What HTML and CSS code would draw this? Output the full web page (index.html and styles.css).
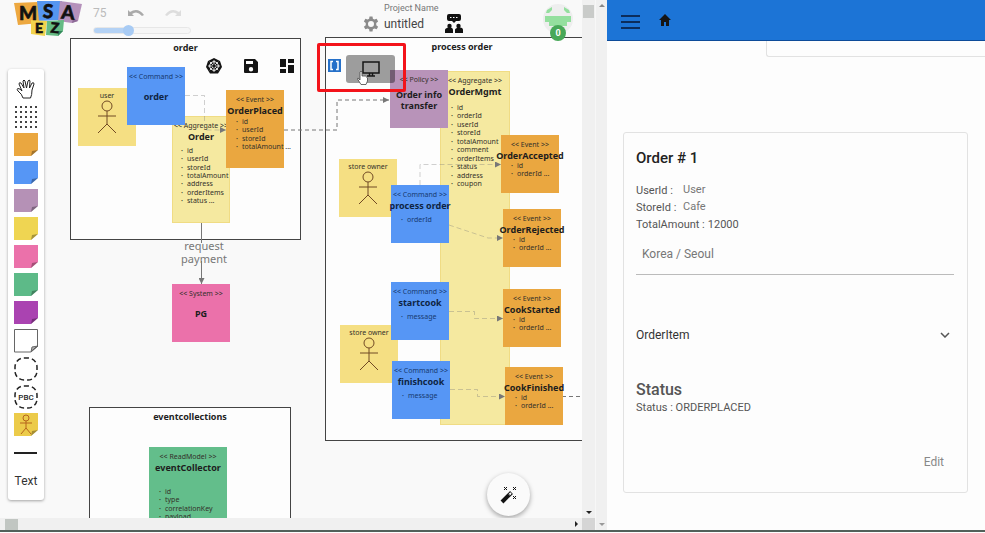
FILE: index.html
```
<!DOCTYPE html>
<html lang="en">
<head>
<meta charset="utf-8">
<title>MSA Ez - untitled</title>
<link rel="stylesheet" href="styles.css">
</head>
<body>
<div class="modeler">
  <main class="canvas">
    <section class="frame frame-order">
      <h2>order</h2>
      <div class="frame-tools">
        <button aria-label="Kubernetes"><svg viewBox="0 0 16 16" width="16" height="16"><path d="M8 0l6 3 2 6-4 6.500H4L0 9l2-6z" fill="#151515"/><g fill="none" stroke="#fff"><circle cx="8" cy="8" r="4.300"/><path d="M8 2v12M2 8h12M3.800 3.800l8.400 8.400M12.200 3.800l-8.400 8.400" stroke-width=".8"/></g><circle cx="8" cy="8" r="1.400" fill="#151515"/></svg></button>
        <button aria-label="Save"><svg viewBox="0 0 14 14" width="14" height="14"><path fill-rule="evenodd" fill="#151515" d="M1 0h10l3 3v10q0 1-1 1H1q-1 0-1-1V1q0-1 1-1zm1 2v3h7V2zm5 6a2.200 2.200 0 1 0 0 4.400A2.200 2.200 0 0 0 7 8z"/></svg></button>
        <button aria-label="Dashboard"><svg viewBox="0 0 14 14" width="14" height="14"><path fill="#151515" d="M0 0h6v8H0zM8 0h6v4H8zM0 10h6v4H0zM8 6h6v8H8z"/></svg></button>
      </div>
    </section>
    <section class="frame frame-process"><h2>process order</h2></section>
    <section class="frame frame-events"><h2>eventcollections</h2></section>

    <article class="note actor n-user"><p>user</p><svg class="person" viewBox="0 0 20 34"><circle cx="10" cy="6" r="5"/><path d="M10 11v13M1 16h18M10 24l-9 9M10 24l9 9"/></svg></article>
    <article class="note actor n-owner1"><p>store owner</p><svg class="person" viewBox="0 0 20 34"><circle cx="10" cy="6" r="5"/><path d="M10 11v13M1 16h18M10 24l-9 9M10 24l9 9"/></svg></article>
    <article class="note actor n-owner2"><p>store owner</p><svg class="person" viewBox="0 0 20 34"><circle cx="10" cy="6" r="5"/><path d="M10 11v13M1 16h18M10 24l-9 9M10 24l9 9"/></svg></article>

    <article class="note aggregate n-order-agg"><p>&lt;&lt; Aggregate &gt;&gt;</p><h3>Order</h3>
      <ul><li>id</li><li>userId</li><li>storeId</li><li>totalAmount</li><li>address</li><li>orderItems</li><li>status ...</li></ul></article>
    <article class="note aggregate n-mgmt"><p>&lt;&lt; Aggregate &gt;&gt;</p><h3>OrderMgmt</h3>
      <ul><li>id</li><li>orderId</li><li>userId</li><li>storeId</li><li>totalAmount</li><li>comment</li><li>orderItems</li><li>status</li><li>address</li><li>coupon</li></ul></article>

    <svg class="links" width="582" height="518" aria-hidden="true">
      <defs><marker id="arrow" viewBox="0 0 6 6" refX="6" refY="3" markerWidth="6" markerHeight="6" markerUnits="userSpaceOnUse" orient="auto"><path d="M0 0l6 3-6 3z" fill="#777" stroke="none"/></marker></defs>
      <path class="faint" d="M185 95.500H204.500V130H226" marker-end="url(#arrow)"/>
      <path class="strong" d="M284 130H337V100H389" marker-end="url(#arrow)"/>
      <path class="solid" d="M201.500 223V243M201.500 261V284" marker-end="url(#arrow)"/>
      <path class="faint" d="M420 185V164.500H501" marker-end="url(#arrow)"/>
      <path class="faint" d="M449 225L488 238H503" marker-end="url(#arrow)"/>
      <path class="faint" d="M449 311.500H474.500V318.500H503" marker-end="url(#arrow)"/>
      <path class="faint" d="M450 389.500H477.500V396.500H505" marker-end="url(#arrow)"/>
      <path class="strong" d="M562 396.500H582"/>
    </svg>
    <p class="link-label">request payment</p>

    <article class="note command plain n-order-cmd"><p>&lt;&lt; Command &gt;&gt;</p><h3>order</h3></article>
    <article class="note command n-process"><p>&lt;&lt; Command &gt;&gt;</p><h3>process order</h3><ul><li>orderId</li></ul></article>
    <article class="note command n-start"><p>&lt;&lt; Command &gt;&gt;</p><h3>startcook</h3><ul><li>message</li></ul></article>
    <article class="note command n-finish"><p>&lt;&lt; Command &gt;&gt;</p><h3>finishcook</h3><ul><li>message</li></ul></article>
    <article class="note event n-placed"><p>&lt;&lt; Event &gt;&gt;</p><h3>OrderPlaced</h3><ul><li>id</li><li>userId</li><li>storeId</li><li>totalAmount ...</li></ul></article>
    <article class="note event n-accepted"><p>&lt;&lt; Event &gt;&gt;</p><h3>OrderAccepted</h3><ul><li>id</li><li>orderId ...</li></ul></article>
    <article class="note event n-rejected"><p>&lt;&lt; Event &gt;&gt;</p><h3>OrderRejected</h3><ul><li>id</li><li>orderId ...</li></ul></article>
    <article class="note event n-started"><p>&lt;&lt; Event &gt;&gt;</p><h3>CookStarted</h3><ul><li>id</li><li>orderId ...</li></ul></article>
    <article class="note event n-finished"><p>&lt;&lt; Event &gt;&gt;</p><h3>CookFinished</h3><ul><li>id</li><li>orderId ...</li></ul></article>
    <article class="note policy n-policy"><p>&lt;&lt; Policy &gt;&gt;</p><h3>Order info transfer</h3></article>
    <article class="note system plain n-pg"><p>&lt;&lt; System &gt;&gt;</p><h3>PG</h3></article>
    <article class="note read n-read"><p>&lt;&lt; ReadModel &gt;&gt;</p><h3>eventCollector</h3><ul><li>id</li><li>type</li><li>correlationKey</li><li>payload</li></ul></article>

    <header class="topbar">
      <svg class="logo" viewBox="0 0 70 38" width="70" height="38" role="img" aria-label="MSA Ez">
        <path d="M0 3l24-1 2 21-22 2z" fill="#eda840"/><path d="M23 1h25l-3 19-20 1z" fill="#5596f0"/><path d="M46 1l22 3-4 17-6 2-14-2z" fill="#b591bb"/><path d="M58 23l1-5 5 3z" fill="#8e6b97"/>
        <path d="M17 20l16 1-2 15-14-2z" fill="#f1d34d"/><path d="M33 21l17-1-1 11-5 5-12-1z" fill="#65bb84"/><path d="M44 36v-5h5z" fill="#34875b"/>
        <g font-family="Lato, sans-serif" font-weight="900" fill="#111" stroke="#111" stroke-width=".6" text-anchor="middle"><text x="14" y="20" font-size="19">M</text><text x="34" y="18" font-size="19" transform="rotate(3 34 12)">S</text><text x="54" y="19" font-size="19" transform="rotate(5 54 12)">A</text><text x="25" y="33" font-size="14">E</text><text x="41" y="33" font-size="14" transform="rotate(5 41 28)">Z</text></g>
      </svg>
      <div class="view-tools">
        <div class="history">
          <output>75</output>
          <button aria-label="Undo"><svg viewBox="0 0 16 8" width="16" height="8"><path d="M0 1v6h6L4 5q5-4 10 2l2-1Q10-2 2 3z" fill="#aaa"/></svg></button>
          <button aria-label="Redo"><svg viewBox="0 0 16 8" width="16" height="8"><path d="M16 1v6h-6l2-2Q7 1 2 7L0 6q6-8 14-3z" fill="#ddd"/></svg></button>
        </div>
        <input class="zoom" type="range" min="0" max="100" value="34" aria-label="Zoom">
      </div>
      <div class="project">
        <label for="project-name">Project Name</label>
        <div class="project-row">
          <svg viewBox="0 0 24 24" width="18" height="18"><path fill="#8b8b8b" fill-rule="evenodd" d="M10 2h4l.5 3 2 1 3-1 2 3.500L19 10.500v3l2.500 2-2 3.500-3-1-2 1-.5 3h-4l-.5-3-2-1-3 1-2-3.500 2.500-2v-3L2.500 8.500l2-3.500 3 1 2-1zM12 8a4 4 0 1 0 0 8 4 4 0 0 0 0-8z"/></svg>
          <input id="project-name" value="untitled">
        </div>
      </div>
      <button class="chat" aria-label="Discussion"><svg viewBox="0 0 18 20" width="18" height="20"><path fill="#111" d="M4 0h10q2 0 2 2v3q0 2-2 2h-3L9 9 7 7H4Q2 7 2 5V2q0-2 2-2zM0 19v-3q0-2 4-2.500t4 2.500v3zm10 0v-3q0-2 4-2.500t4 2.500v3z"/><circle cx="4.500" cy="12" r="2.200" fill="#111"/><circle cx="13.500" cy="12" r="2.200" fill="#111"/><path stroke="#fff" stroke-dasharray="1.500 1.500" d="M5 3.500h8"/></svg></button>
      <div class="avatar">
        <svg viewBox="0 0 30 30" width="30" height="30"><circle cx="15" cy="15" r="15" fill="#eee"/><path fill="#94df9e" d="M2 12h26v6h-4v4H6v-4H2zM4 6l5-3v3l-3 3H3zm22 0l-5-3v3l3 3h3zM9 24h12v4H9z"/></svg>
        <span class="badge">0</span>
      </div>
    </header>

    <button class="brackets" aria-label="Code"><svg viewBox="0 0 13 13" width="13" height="13"><path d="M5 2.500H3v8h2M8 2.500h2v8H8" fill="none" stroke="#fff" stroke-width="1.500"/></svg></button>
    <button class="preview" aria-label="Preview"><svg viewBox="0 0 18 16" width="18" height="16"><path d="M1 1h16v11H1zM5 15h8M7.500 12v3M10.500 12v3" fill="none" stroke="#161616" stroke-width="1.500"/></svg></button>
    <div class="highlight"></div>
    <svg class="pointer" viewBox="0 0 11 15" width="11" height="15"><path d="M3 8V2q1-2 2 0v4q4-1 5.500 2v3L9 14.500H4L.5 9q0-2 2.500 1z" fill="#fff" stroke="#444" stroke-width=".8"/></svg>

    <nav class="palette" aria-label="Elements">
      <button aria-label="Hand"><svg viewBox="0 0 20 20" width="20" height="20"><path fill="#fff" stroke="#222" stroke-width="1" stroke-linejoin="round" d="M7 19Q6 15 2 12 0 10 2 9.500q2 0 4 2.500L3 5q0-2 2-1l3 5-1-7q1-2 2 0l1.500 7L12 2q1.500-2 2 0l-.5 7L16 4q2-1 2 1l-2 6q0 5-1.500 8z"/></svg></button>
      <button aria-label="Select area"><svg viewBox="0 0 22 22" width="22" height="22"><path fill="none" stroke="#444" stroke-width="2" stroke-dasharray="2 3" d="M0 1h22M0 6h22M0 11h22M0 16h22M0 21h22"/></svg></button>
      <button class="orange" aria-label="Event"><svg class="sticky" viewBox="0 0 24 24"><path d="M0 0h24v17l-7 6H0z"/><path class="fold" d="M17 23l1-5 6-1z"/></svg></button>
      <button class="blue" aria-label="Command"><svg class="sticky" viewBox="0 0 24 24"><path d="M0 0h24v17l-7 6H0z"/><path class="fold" d="M17 23l1-5 6-1z"/></svg></button>
      <button class="purple" aria-label="Policy"><svg class="sticky" viewBox="0 0 24 24"><path d="M0 0h24v17l-7 6H0z"/><path class="fold" d="M17 23l1-5 6-1z"/></svg></button>
      <button class="yellow" aria-label="Aggregate"><svg class="sticky" viewBox="0 0 24 24"><path d="M0 0h24v17l-7 6H0z"/><path class="fold" d="M17 23l1-5 6-1z"/></svg></button>
      <button class="pink" aria-label="System"><svg class="sticky" viewBox="0 0 24 24"><path d="M0 0h24v17l-7 6H0z"/><path class="fold" d="M17 23l1-5 6-1z"/></svg></button>
      <button class="green" aria-label="Read model"><svg class="sticky" viewBox="0 0 24 24"><path d="M0 0h24v17l-7 6H0z"/><path class="fold" d="M17 23l1-5 6-1z"/></svg></button>
      <button class="violet" aria-label="UI"><svg class="sticky" viewBox="0 0 24 24"><path d="M0 0h24v17l-7 6H0z"/><path class="fold" d="M17 23l1-5 6-1z"/></svg></button>
      <button class="blank" aria-label="Note"><svg class="sticky" viewBox="0 0 24 24"><path d="M.5.5h23v16.500l-7 6H.5z"/><path class="fold" d="M17 23l1-5 6-1z"/></svg></button>
      <button aria-label="Bounded context"><svg viewBox="0 0 24 24" width="24" height="24"><rect x="1" y="1" width="22" height="22" rx="9" fill="none" stroke="#222" stroke-width="1.500" stroke-dasharray="5 3"/></svg></button>
      <button aria-label="PBC"><svg viewBox="0 0 24 24" width="24" height="24"><rect x="1" y="1" width="22" height="22" rx="9" fill="none" stroke="#222" stroke-width="1.500" stroke-dasharray="5 3"/><text x="12" y="15" text-anchor="middle" font-family="Roboto, sans-serif" font-weight="500" font-size="8" fill="#222" stroke="none">PBC</text></svg></button>
      <button class="gold" aria-label="Actor"><svg class="sticky" viewBox="0 0 24 24"><path d="M0 0h24v17l-7 6H0z"/><path class="fold" d="M17 23l1-5 6-1z"/><g fill="none" stroke="#b5651d"><circle cx="12" cy="5" r="3"/><path d="M12 8v7M6 10h12M12 15l-5 6M12 15l5 6"/></g></svg></button>
      <button aria-label="Line"><svg viewBox="0 0 24 24" width="24" height="24"><path d="M0 12h23" stroke="#222" stroke-width="2"/></svg></button>
      <button class="text-tool">Text</button>
    </nav>

    <button class="magic" aria-label="Generate"><svg viewBox="0 0 18 18" width="18" height="18"><path d="M2 16L9 9" stroke="#111" stroke-width="4"/><path d="M9 9l2.500-2.500" stroke="#111" stroke-width="4"/><path d="M9.500 8.500l1.500-1.500" stroke="#fff" stroke-width="2"/><path d="M4 1l3 3M7 1L4 4M13 1l3 3M16 1l-3 3M13 10l3 3M16 10l-3 3" stroke="#111"/></svg></button>
  </main>
  <div class="vbar"><span class="thumb"></span><span class="down"></span></div>
  <div class="hbar"><span class="thumb"></span><span class="right"></span></div>
  <div class="corner"></div>
</div>
<div class="outer-bar"><span class="up"></span><span class="down"></span></div>

<div class="shop">
  <header class="appbar">
    <button aria-label="Menu"><svg viewBox="0 0 20 16" width="20" height="16"><path d="M0 2h19M0 8h19M0 14h19" stroke="#0c2d5c" stroke-width="2"/></svg></button>
    <a href="#" aria-label="Home"><svg viewBox="0 0 12 12" width="12" height="12"><path d="M6 0l6 6h-2v6H7V8H5v4H2V6H0z" fill="#151515"/></svg></a>
  </header>
  <div class="page">
    <div class="previous"></div>
    <section class="card">
      <h1>Order # 1</h1>
      <dl>
        <div><dt>UserId :</dt><dd class="linked">User</dd></div>
        <div><dt>StoreId :</dt><dd class="linked">Cafe</dd></div>
        <div><dt>TotalAmount :</dt><dd>12000</dd></div>
      </dl>
      <input class="address" value="Korea / Seoul" aria-label="Address">
      <button class="expander">OrderItem<svg viewBox="0 0 10 6" width="10" height="6"><path d="M1 1l4 4 4-4" fill="none" stroke="#555" stroke-width="1.500"/></svg></button>
      <h2>Status</h2>
      <p>Status : ORDERPLACED</p>
      <div class="actions"><button>Edit</button></div>
    </section>
  </div>
</div>
</body>
</html>
```
FILE: styles.css
```
* { box-sizing: border-box; }
html { background: #fdfdfd; }
body { margin: 0; height: calc(100vh - 1px); display: flex; overflow: hidden; border-bottom: 2px solid #52605a; font-family: Roboto, sans-serif; color: #222; }
button { border: 0; padding: 0; background: none; font: inherit; color: inherit; display: flex; align-items: center; justify-content: center; }
input { font: inherit; color: inherit; }
h1, h2, h3, p, ul, dl, dd { margin: 0; padding: 0; }
svg { display: block; }

/* Modeler */
.modeler { flex: 0 1 595px; display: grid; grid-template: 1fr 12px / 1fr 13px; }
.canvas { position: relative; overflow: hidden; background: #f9f9f9; }
.vbar, .hbar, .outer-bar { background: #f0f0f0; display: flex; justify-content: space-between; align-items: center; }
.vbar { flex-direction: column; padding: 5px 0 4px; }
.vbar .thumb { width: 11px; height: 13px; background: #c9cbc9; }
.hbar { padding: 0 4px 0 5px; }
.hbar .thumb { width: 13px; height: 11px; background: #c1c6c2; }
.corner { background: #d5d5d5; }
.outer-bar { flex: 0 0 12px; flex-direction: column; padding: 4px 0; border-left: 1px solid #f7f7f7; }
.down, .up { border: 3px solid transparent; }
.down { border-top-color: #222; border-bottom: 0; }
.up { border-bottom-color: #888; border-top: 0; }
.outer-bar .down { border-top-color: #999; }
.right { border: 3px solid transparent; border-left-color: #222; border-right: 0; }

.frame { position: absolute; border: 1px solid #444; background: #fdfdfd; padding-top: 3px; }
.frame h2 { font: 700 9px/12px "Noto Sans", sans-serif; text-align: center; }
.frame-order { left: 70px; top: 38px; width: 231px; height: 202px; }
.frame-process { left: 325px; top: 37px; width: 274px; height: 404px; }
.frame-events { left: 89px; top: 407px; width: 202px; height: 160px; }
.frame-tools { display: flex; justify-content: flex-end; align-items: center; gap: 22px; padding: 4px 6px; }

.note { position: absolute; width: 58px; height: 58px; padding-top: 5px; font: 7px/9px "Noto Sans", sans-serif; color: #33302a; display: flex; flex-direction: column; align-items: center; white-space: nowrap; }
.note h3 { font: 700 9px/12px "Noto Sans", sans-serif; color: #1d1d1d; margin-top: 1px; text-align: center; }
.note.plain h3 { margin-top: 10px; }
.note ul { list-style: none; align-self: stretch; padding-left: 10px; line-height: 8px; }
.note li { display: flex; }
.note li::before { content: "·"; flex: 0 0 6px; font-weight: 700; }
.note.actor { background: #f5df83; padding-top: 3px; }
.person { width: 20px; height: 34px; fill: none; stroke: #714a24; }
.command { background: #5696f5; color: #173a70; }
.command ul { margin-top: 4px; }
.command h3 { color: #0e2443; }
.event { background: #eaa740; }
.policy { background: #b893b9; }
.policy h3 { white-space: normal; line-height: 11px; margin-top: 5px; }
.system { background: #eb71aa; }
.read { background: #63be8b; }
.aggregate { background: #f5e9a0; border: 1px solid #f0dc84; }
.note.aggregate { padding-top: 4px; }
.aggregate ul, .n-placed ul, .n-read ul { display: flex; flex-direction: column; justify-content: space-between; }

.n-user { left: 78px; top: 88px; }
.n-owner1 { left: 339px; top: 159px; }
.n-owner2 { left: 340px; top: 325px; }
.n-order-agg { left: 172px; top: 116px; height: 107px; }
.note.n-order-agg ul { height: 58px; margin-top: 4px; padding-left: 8px; }
.n-mgmt { left: 440px; top: 71px; width: 70px; height: 354px; }
.n-mgmt ul { height: 84px; margin-top: 6px; }
.n-order-cmd { left: 127px; top: 67px; }
.n-process { left: 391px; top: 185px; }
.n-start { left: 391px; top: 282px; }
.n-finish { left: 392px; top: 361px; }
.n-placed { left: 226px; top: 90px; height: 78px; }
.n-placed ul { height: 33px; margin-top: 1px; }
.n-accepted { left: 501px; top: 135px; }
.n-rejected { left: 503px; top: 209px; }
.n-started { left: 503px; top: 289px; }
.n-finished { left: 505px; top: 367px; }
.n-policy { left: 390px; top: 70px; }
.n-pg { left: 172px; top: 284px; }
.n-read { left: 149px; top: 447px; width: 78px; height: 110px; }
.n-read ul { height: 33px; margin-top: 14px; }

.links { position: absolute; left: 0; top: 0; fill: none; stroke: #666; }
.faint { stroke: #777; stroke-opacity: .35; stroke-dasharray: 5 3; }
.strong { stroke: #777; stroke-dasharray: 4 3; }
.solid { stroke: #777; }
.link-label { position: absolute; left: 174px; top: 239px; width: 60px; text-align: center; font: 11px/13px "Noto Sans", sans-serif; color: #777; }

.topbar { position: absolute; left: 0; right: 0; top: 0; padding: 0 9px 0 14px; display: flex; align-items: flex-start; }
.view-tools { margin-left: 9px; width: 98px; }
.history { display: flex; align-items: center; justify-content: space-between; height: 25px; color: #bbb; padding-right: 10px; font-size: 12px; }
.zoom { appearance: none; display: block; margin: 2px 0 0; width: 98px; height: 7px; border: 1px solid #e7e7e7; border-radius: 4px; background: linear-gradient(to right, #b4d2f5 36%, #f6f6f6 36%); }
.zoom::-webkit-slider-thumb { appearance: none; width: 11px; height: 11px; border-radius: 50%; background: #a8cbf4; }
.project { margin-left: 171px; width: 78px; }
.project label { display: block; font-size: 9px; line-height: 12px; color: #777; padding: 2px 0 0 22px; white-space: nowrap; }
.project-row { display: flex; align-items: center; gap: 4px; }
.project input { border: 0; padding: 0; background: none; width: 54px; height: 20px; font: 12px/20px Roboto, sans-serif; color: #444; }
.chat { margin: 14px 0 0 5px; }
.avatar { margin: 4px 0 0 auto; position: relative; }
.badge { position: absolute; left: 7px; top: 21px; width: 16px; height: 16px; border-radius: 50%; background: #48a858; color: #fff; font-size: 9px; font-weight: 700; line-height: 16px; text-align: center; }

.brackets { position: absolute; left: 328px; top: 59px; background: #2570c9; }
.preview { position: absolute; left: 346px; top: 55px; width: 49px; height: 28px; border-radius: 3px; background: rgba(0, 0, 0, .38); }
.highlight { position: absolute; left: 317px; top: 43px; width: 89px; height: 49px; border: 3px solid #f3131a; border-radius: 2px; }
.pointer { position: absolute; left: 357px; top: 70px; }

.palette { position: absolute; left: 8px; top: 69px; width: 36px; background: #fff; border-radius: 3px; box-shadow: 0 1px 3px rgba(0, 0, 0, .35); display: flex; flex-direction: column; align-items: center; padding: 6px 0 5px; }
.palette button { height: 28px; }
.sticky { width: 24px; height: 24px; fill: currentColor; }
.fold { fill: rgba(0, 0, 0, .3); }
.orange { color: #eaa740; }
.blue { color: #5696f5; }
.purple { color: #b591b6; }
.yellow { color: #efd552; }
.pink { color: #eb71aa; }
.green { color: #5dba88; }
.violet { color: #aa43b1; }
.blank { color: #fff; }
.blank svg { stroke: #666; }
.gold { color: #eccb4a; }
.palette .text-tool { font: 12px/28px Roboto, sans-serif; color: #333; }
.magic { position: absolute; left: 487px; bottom: 2px; width: 43px; height: 43px; border-radius: 50%; background: #fafafa; box-shadow: 0 2px 5px rgba(0, 0, 0, .35); }

/* Order service screen */
.shop { flex: 1; min-width: 0; display: flex; flex-direction: column; }
.appbar { height: 41px; background: #1c74d6; border-bottom: 1px solid #0d4b99; padding: 0 14px; display: flex; align-items: center; gap: 18px; }
.appbar button { padding-top: 3px; }
.page { padding: 0 15px 0 16px; }
.previous { height: 16px; margin: 0 -15px 75px 143px; border: solid #e2e2e2; border-width: 0 0 1px 1px; border-radius: 0 0 0 3px; }
.card { border: 1px solid #e2e2e2; border-radius: 3px; padding: 14px 13px 16px 12px; margin-right: 2px; }
h1 { font-size: 15px; line-height: 22px; font-weight: 500; }
dl { font-size: 11px; line-height: 17px; color: #555; margin-top: 13px; }
dl div { display: flex; gap: 3px; }
dt { min-width: 44px; }
.linked { line-height: 15px; color: #777; }
.address { display: block; width: 100%; height: 42px; border: 0; border-bottom: 1px solid #bbb; padding: 0 6px; background: none; font-size: 12px; color: #777; }
.expander { width: 100%; height: 40px; margin-top: 40px; justify-content: space-between; padding: 0 4px 0 0; font-size: 12px; color: #333; }
.card h2 { font-size: 16px; line-height: 20px; font-weight: 500; color: #555; margin-top: 25px; }
.card p { font-size: 11px; line-height: 16px; color: #555; }
.actions { display: flex; justify-content: flex-end; margin-top: 32px; padding-right: 10px; }
.actions button { height: 28px; font-size: 12px; color: #888; }
```
